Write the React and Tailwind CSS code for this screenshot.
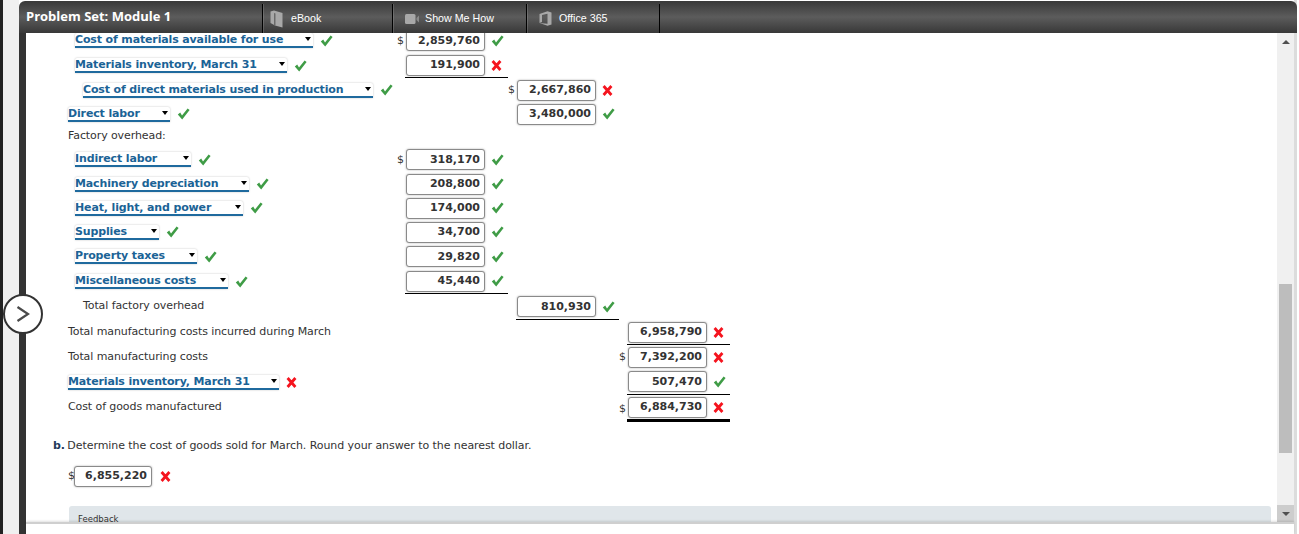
import React from "react";

const Check = () => (
  <svg width="13" height="12" viewBox="0 0 13 12" className="shrink-0">
    <path d="M0.8 6.6 L3.2 4.6 L5 7.4 L10.6 0.4 L12.6 2 L5.2 11.6 Z" fill="#3f9c46" />
  </svg>
);
const Cross = () => (
  <svg width="11" height="11" viewBox="0 0 11 11" className="shrink-0">
    <path d="M1.6 1 L9.4 10 M9.4 1 L1.6 10" stroke="#f5141e" strokeWidth="2.8" fill="none" />
  </svg>
);
const Mark = ({ ok }) => (ok ? <Check /> : <Cross />);

const Select = ({ text, width, ok }) => (
  <div className="flex items-center">
    <div
      className="relative flex h-[15px] items-center rounded-t-[2px] border-b-2 border-[#1f6a9e] bg-white text-[11px] font-bold leading-none tracking-[-0.14px] text-[#1b6396] shadow-[0_0_2px_rgba(0,0,0,0.25)]"
      style={{ width }}
    >
      <span className="whitespace-nowrap">{text}</span>
      <span className="absolute right-[2px] top-[4px] h-0 w-0 border-x-[3px] border-t-[4px] border-x-transparent border-t-black" />
    </div>
    <div className="ml-[7px]">
      <Mark ok={ok} />
    </div>
  </div>
);

const Box = ({ value, small }) => (
  <div
    className={`flex h-[21px] shrink-0 items-center justify-end rounded-[3px] border border-[#8a8a8a] bg-white pr-[4px] pt-[1px] text-[11px] font-bold text-[#333] shadow-[0_0_2px_rgba(0,0,0,0.35)] ${small ? "w-[78px]" : "w-[79px]"}`}
  >
    {value}
  </div>
);

const NumBox = ({ value, ok, dollar, line, dbl }) => {
  const under = dbl
    ? "border-b-[3px] border-black"
    : line
      ? "border-b border-black"
      : "";
  return (
    <div className="flex w-[111px] shrink-0">
      <span className="flex w-[8px] items-center justify-start pt-[1px] text-[11px] text-[#333]">{dollar ? "$" : ""}</span>
      <div className={`flex w-[103px] items-center pl-[1px] ${under}`}>
        <Box value={value} />
        <div className="ml-[6px]">
          <Mark ok={ok} />
        </div>
      </div>
    </div>
  );
};

const rows = [
  { h: "h-[25px]", pad: "pl-[49px]", sel: ["Cost of materials available for use", 238, true], col: 1, v: "2,859,760", ok: true, d: true },
  { h: "h-[25px]", pad: "pl-[49px]", sel: ["Materials inventory, March 31", 212, true], col: 1, v: "191,900", ok: false, line: true },
  { h: "h-[24px]", pad: "pl-[57px]", sel: ["Cost of direct materials used in production", 290, true], col: 2, v: "2,667,860", ok: false, d: true },
  { h: "h-[24px]", pad: "pl-[42px]", sel: ["Direct labor", 102, true], col: 2, v: "3,480,000", ok: true },
  { h: "h-[21px]", pad: "pl-[42px]", text: "Factory overhead:" },
  { h: "h-[25px]", pad: "pl-[49px]", sel: ["Indirect labor", 116, true], col: 1, v: "318,170", ok: true, d: true },
  { h: "h-[24px]", pad: "pl-[49px]", sel: ["Machinery depreciation", 174, true], col: 1, v: "208,800", ok: true },
  { h: "h-[24px]", pad: "pl-[49px]", sel: ["Heat, light, and power", 168, true], col: 1, v: "174,000", ok: true },
  { h: "h-[24px]", pad: "pl-[49px]", sel: ["Supplies", 84, true], col: 1, v: "34,700", ok: true },
  { h: "h-[25px]", pad: "pl-[49px]", sel: ["Property taxes", 122, true], col: 1, v: "29,820", ok: true },
  { h: "h-[25px]", pad: "pl-[49px]", sel: ["Miscellaneous costs", 153, true], col: 1, v: "45,440", ok: true, line: true },
  { h: "h-[26px]", pad: "pl-[57px] pb-[2px]", text: "Total factory overhead", col: 2, v: "810,930", ok: true, line: true },
  { h: "h-[25px]", pad: "pl-[42px]", text: "Total manufacturing costs incurred during March", col: 3, v: "6,958,790", ok: false, line: true },
  { h: "h-[24px]", pad: "pl-[42px]", text: "Total manufacturing costs", col: 3, v: "7,392,200", ok: false, d: true },
  { h: "h-[26px]", pad: "pl-[42px]", sel: ["Materials inventory, March 31", 211, false], col: 3, v: "507,470", ok: true, line: true },
  { h: "h-[27px]", pad: "pl-[42px] pb-[2px]", text: "Cost of goods manufactured", col: 3, v: "6,884,730", ok: false, d: true, dbl: true },
];

const Row = ({ r }) => (
  <div className={`flex ${r.h}`}>
    <div className={`flex w-[371px] shrink-0 items-center ${r.pad}`}>
      {r.sel ? (
        <Select text={r.sel[0]} width={r.sel[1]} ok={r.sel[2]} />
      ) : (
        <span className="whitespace-nowrap text-[11px] tracking-[-0.09px] text-[#333]">{r.text}</span>
      )}
    </div>
    {r.col > 1 && <div className="w-[111px] shrink-0" />}
    {r.col > 2 && <div className="w-[111px] shrink-0" />}
    {r.col && <NumBox value={r.v} ok={r.ok} dollar={r.d} line={r.line} dbl={r.dbl} />}
  </div>
);

const Tab = ({ width, icon, label }) => (
  <div
    className="flex h-[29px] shrink-0 items-center self-end border-l border-black text-[10.7px] text-white shadow-[inset_1px_0_0_rgba(255,255,255,0.15)]"
    style={{ width }}
  >
    {icon}
    <span className="font-['Liberation_Sans',sans-serif]">{label}</span>
  </div>
);

const BookIcon = () => (
  <svg width="13" height="18" viewBox="0 0 13 18" className="ml-[7px] mr-[8px]">
    <path d="M0.5 1.5 L4 0.5 L12.5 3 L12.5 17.5 L5 15.5 L0.5 13 Z" fill="#a8a8a8" />
    <path d="M4 3 L5.5 3.5 L5.5 15.5 L4 15 Z" fill="#6a6a6a" />
  </svg>
);
const VideoIcon = () => (
  <svg width="15" height="10" viewBox="0 0 15 10" className="ml-[12px] mr-[5px]">
    <rect x="0" y="0" width="10.5" height="10" rx="1.5" fill="#a8a8a8" />
    <path d="M11.5 4 L14 1.5 L14 8.5 L11.5 6 Z" fill="#8a8a8a" />
  </svg>
);
const OfficeIcon = () => (
  <svg width="13" height="15" viewBox="0 0 13 15" className="ml-[12px] mr-[7px]">
    <path d="M0.5 3 L8.5 0.3 L12.5 1.5 L12.5 13.5 L8.5 14.7 L0.5 12 L8.5 12.8 L8.5 2.8 L3 4 L3 11 L0.5 12 Z" fill="#a8a8a8" />
  </svg>
);

export default function App() {
  return (
    <div className="relative flex h-[534px] w-[1299px] overflow-hidden bg-white font-['DejaVu_Sans',sans-serif]">
      <div className="w-[3px] shrink-0 bg-[#222222]" />
      <div className="w-[16px] shrink-0 bg-[#f0f0f0]" />

      <div className="flex h-full w-[1278px] shrink-0 flex-col border-r-[3px] border-[#dcdcdc] pt-[1px]">
        <header className="relative z-10 -mr-[3px] flex h-[32px] shrink-0 items-center rounded-t-[6px] bg-[linear-gradient(to_bottom,#383838_0%,#4a4a4a_25%,#5c5c5c_50%,#4a4a4a_75%,#383838_100%)]">
          <div className="w-[243px] shrink-0 pl-[7px] font-['Open_Sans',sans-serif] text-[13px] font-bold text-white">
            Problem Set: Module 1
          </div>
          <Tab width={130} icon={<BookIcon />} label="eBook" />
          <Tab width={134} icon={<VideoIcon />} label="Show Me How" />
          <Tab width={133} icon={<OfficeIcon />} label="Office 365" />
          <div className="h-[29px] self-end border-l border-black shadow-[inset_1px_0_0_rgba(255,255,255,0.15)]" />
        </header>

        <div className="flex min-h-0 flex-1">
          <div className="w-[7px] shrink-0 bg-[#333333]" />
          <div className="flex min-w-0 flex-1 flex-col">
            <div className="flex min-h-0 flex-1">
              <main className="min-w-0 flex-1 overflow-hidden">
                <div className="-mt-[5px]">
                  {rows.map((r, i) => (
                    <Row key={i} r={r} />
                  ))}
                  <p className="mt-[17px] pl-[27px] text-[11px] leading-[14px] tracking-[-0.07px] text-[#333]">
                    <b className="-mr-[1px] font-bold text-[#1f3a5a]">b.</b> Determine the cost of goods sold for March. Round your answer to the nearest dollar.
                  </p>
                  <div className="mt-[12px] flex h-[22px] items-center pl-[42px]">
                    <span className="w-[6px] text-[11px] text-[#333]">$</span>
                    <Box value="6,855,220" small />
                    <div className="ml-[8px]">
                      <Cross />
                    </div>
                  </div>
                  <div className="ml-[43px] mr-[6px] mt-[19px] h-[40px] rounded-t-[3px] bg-[#e0e6ea] pl-[9px] pt-[7px] text-[8.5px] leading-[12px] text-[#333]">
                    Feedback
                  </div>
                </div>
              </main>
              <aside className="flex w-[17px] shrink-0 flex-col bg-[#f0f0f0]">
                <div className="flex h-[17px] items-center justify-center">
                  <span className="h-0 w-0 border-x-[4px] border-b-[4px] border-x-transparent border-b-[#505050]" />
                </div>
                <div className="mx-[2px] mt-[234px] h-[169px] bg-[#bdbdbd]" />
                <div className="mt-auto flex h-[17px] items-center justify-center bg-[#cdcdcd]">
                  <span className="h-0 w-0 border-x-[4px] border-t-[4px] border-x-transparent border-t-[#505050]" />
                </div>
              </aside>
            </div>
            <footer className="h-[12px] shrink-0 border-t-[2px] border-[#cfcfcf] bg-white shadow-[0_-1px_2px_rgba(0,0,0,0.12)]" />
          </div>
        </div>
      </div>

      <button className="absolute left-[3px] top-[294px] z-20 flex h-[40px] w-[40px] items-center justify-center rounded-full border-2 border-[#333] bg-white">
        <svg width="14" height="18" viewBox="0 0 14 18">
          <path d="M1.5 2 L12 9 L1.5 16" stroke="#4a4a4a" strokeWidth="2.2" fill="none" />
        </svg>
      </button>
    </div>
  );
}
